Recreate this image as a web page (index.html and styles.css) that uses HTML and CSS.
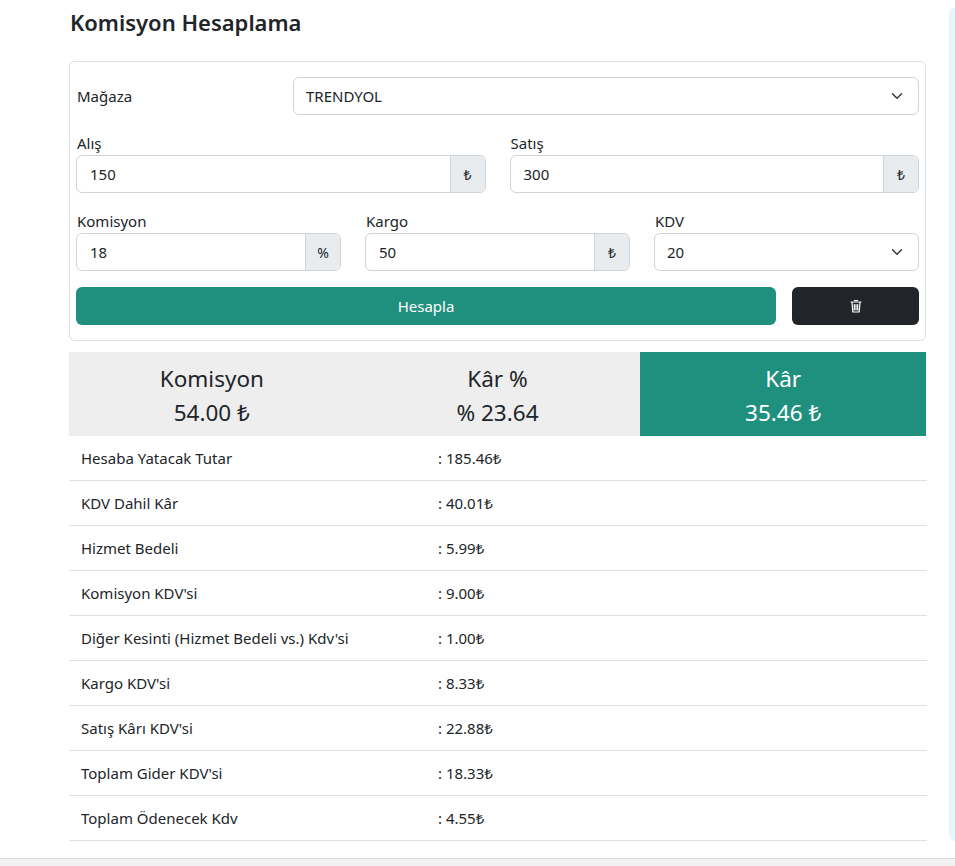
FILE: index.html
```html
<!DOCTYPE html>
<html lang="tr">
<head>
<meta charset="utf-8">
<title>Komisyon Hesaplama</title>
<link rel="stylesheet" href="styles.css">
</head>
<body>
<div class="layout">
  <main class="main">
    <h1 class="title">Komisyon Hesaplama</h1>
    <form class="card">
      <div class="store-row">
        <label class="lbl">Mağaza</label>
        <div class="select"><span>TRENDYOL</span><svg class="chev" viewBox="0 0 16 16"><path d="M2 5l6 6 6-6" fill="none" stroke="#343a40" stroke-width="2" stroke-linecap="round" stroke-linejoin="round"/></svg></div>
      </div>
      <div class="grid2">
        <div class="field">
          <label class="lbl">Alış</label>
          <div class="igroup"><span class="ival">150</span><span class="addon">₺</span></div>
        </div>
        <div class="field">
          <label class="lbl">Satış</label>
          <div class="igroup"><span class="ival">300</span><span class="addon">₺</span></div>
        </div>
      </div>
      <div class="grid3">
        <div class="field">
          <label class="lbl">Komisyon</label>
          <div class="igroup"><span class="ival">18</span><span class="addon">%</span></div>
        </div>
        <div class="field">
          <label class="lbl">Kargo</label>
          <div class="igroup"><span class="ival">50</span><span class="addon">₺</span></div>
        </div>
        <div class="field">
          <label class="lbl">KDV</label>
          <div class="select"><span>20</span><svg class="chev" viewBox="0 0 16 16"><path d="M2 5l6 6 6-6" fill="none" stroke="#343a40" stroke-width="2" stroke-linecap="round" stroke-linejoin="round"/></svg></div>
        </div>
      </div>
      <div class="btns">
        <button type="button" class="btn btn-green">Hesapla</button>
        <button type="button" class="btn btn-dark"><svg class="trash" viewBox="0 0 12 14"><path d="M4.5 1.5h3M1 3h10M2 3.5l.8 9.5h6.4L10 3.5M4.3 5.5v5.5M6 5.5v5.5M7.7 5.5v5.5" fill="none" stroke="#fff" stroke-width="1.2" stroke-linecap="round" stroke-linejoin="round"/></svg></button>
      </div>
    </form>
    <div class="stats">
      <div class="stat"><div>Komisyon</div><div>54.00 ₺</div></div>
      <div class="stat"><div>Kâr %</div><div>% 23.64</div></div>
      <div class="stat stat-green"><div>Kâr</div><div>35.46 ₺</div></div>
    </div>
    <table class="details">
      <tr><td>Hesaba Yatacak Tutar</td><td>: 185.46₺</td></tr>
      <tr><td>KDV Dahil Kâr</td><td>: 40.01₺</td></tr>
      <tr><td>Hizmet Bedeli</td><td>: 5.99₺</td></tr>
      <tr><td>Komisyon KDV'si</td><td>: 9.00₺</td></tr>
      <tr><td>Diğer Kesinti (Hizmet Bedeli vs.) Kdv'si</td><td>: 1.00₺</td></tr>
      <tr><td>Kargo KDV'si</td><td>: 8.33₺</td></tr>
      <tr><td>Satış Kârı KDV'si</td><td>: 22.88₺</td></tr>
      <tr><td>Toplam Gider KDV'si</td><td>: 18.33₺</td></tr>
      <tr><td>Toplam Ödenecek Kdv</td><td>: 4.55₺</td></tr>
    </table>
  </main>
  <aside class="side"></aside>
</div>
<footer class="foot"></footer>
</body>
</html>
```
FILE: styles.css
```css
* { box-sizing: border-box; }
html, body { margin: 0; padding: 0; }
body {
  font-family: "Noto Sans", "Open Sans", sans-serif;
  color: #212529;
  background: #fff;
  font-size: 15px;
  overflow: hidden;
}
.layout {
  display: flex;
  padding-left: 69px;
  gap: 23px;
}
.main { width: 857px; flex: none; }
.side {
  flex: 1;
  margin-top: 8px;
  height: 833px;
  background: #e8f5fa;
  border-radius: 8px 0 0 8px;
}
.title {
  margin: 7px 0 24px 1px;
  font-size: 22px;
  font-weight: 600;
  line-height: 30px;
}
.card {
  border: 1px solid #dee2e6;
  border-radius: 6px;
  padding: 15px 6px 15px 6px;
  display: flex;
  flex-direction: column;
  gap: 16px;
  margin-bottom: 11px;
}
.store-row {
  display: grid;
  grid-template-columns: 217px 1fr;
  align-items: center;
}
.lbl {
  display: block;
  line-height: 24px;
  padding-left: 1px;
}
.select {
  height: 38px;
  border: 1px solid #ced4da;
  border-radius: 6px;
  display: flex;
  align-items: center;
  justify-content: space-between;
  padding: 0 15px 0 12px;
}
.chev { width: 12px; height: 12px; }
.grid2 { display: grid; grid-template-columns: 1fr 1fr; gap: 24px; }
.grid3 { display: grid; grid-template-columns: 1fr 1fr 1fr; gap: 24px; }
.igroup {
  height: 38px;
  border: 1px solid #ced4da;
  border-radius: 6px;
  display: flex;
  overflow: hidden;
}
.ival {
  flex: 1;
  display: flex;
  align-items: center;
  padding-left: 13px;
}
.addon {
  width: 35px;
  background: #e9ecef;
  border-left: 1px solid #ced4da;
  display: flex;
  align-items: center;
  justify-content: center;
  font-size: 14px;
}
.btns {
  display: grid;
  grid-template-columns: 1fr 127px;
  gap: 16px;
}
.btn {
  height: 38px;
  border: none;
  border-radius: 6px;
  font-family: inherit;
  font-size: 15px;
  color: #fff;
  display: flex;
  align-items: center;
  justify-content: center;
}
.btn-green { background: #20907e; }
.btn-dark { background: #212529; }
.trash { width: 12px; height: 14px; }
.stats {
  display: grid;
  grid-template-columns: 1fr 1fr 1fr;
  background: #eeeeee;
  height: 84px;
}
.stat {
  text-align: center;
  font-size: 22.5px;
  line-height: 34px;
  padding-top: 10px;
}
.stat-green { background: #20907e; color: #fff; }
.details {
  width: 858px;
  border-collapse: collapse;
}
.details td {
  padding: 12px 12px;
  line-height: 20px;
  border-bottom: 1px solid #dee2e6;
}
.details td:first-child { width: 357px; }
.foot {
  margin-top: 17px;
  height: 20px;
  background: #f1f1f1;
  border-top: 1px solid #dddddd;
}
```
